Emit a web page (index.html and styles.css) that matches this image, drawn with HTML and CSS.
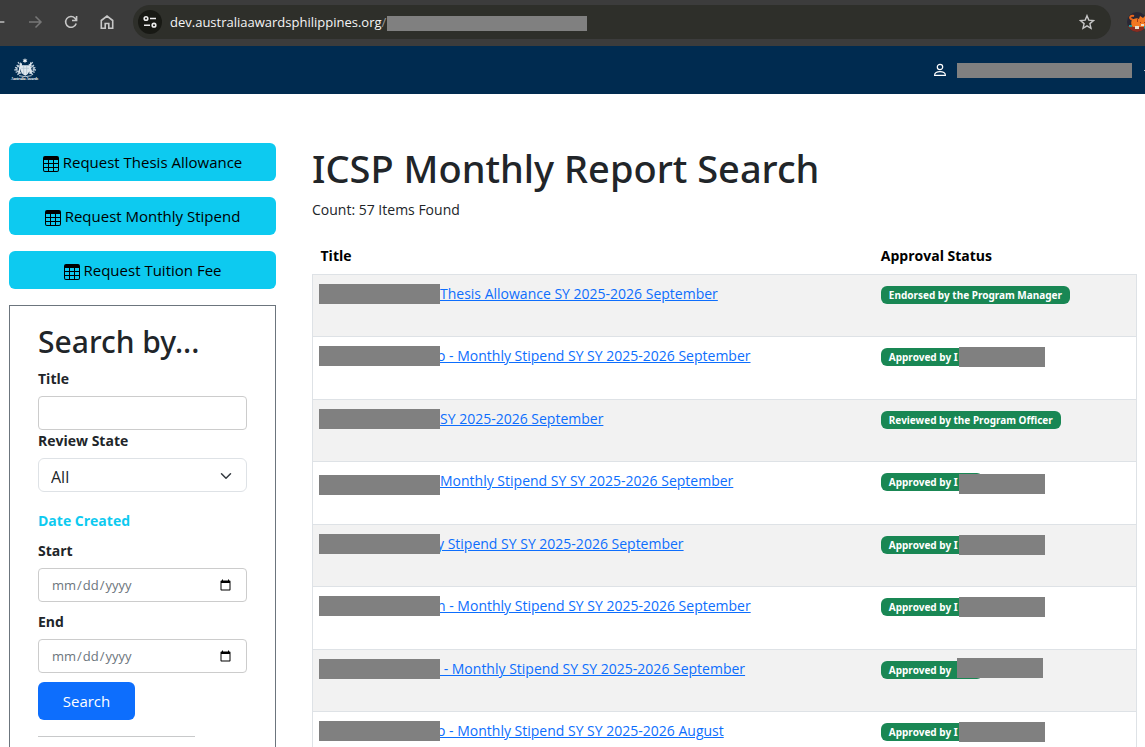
FILE: index.html
```html
<!DOCTYPE html>
<html lang="en">
<head>
<meta charset="utf-8">
<title>ICSP Monthly Report Search</title>
<link rel="stylesheet" href="styles.css">
</head>
<body>
<svg class="sprite" aria-hidden="true">
  <symbol id="table-icon" viewBox="0 0 16 16"><path d="M0 2a2 2 0 0 1 2-2h12a2 2 0 0 1 2 2v12a2 2 0 0 1-2 2H2a2 2 0 0 1-2-2zm15 2h-4v3h4zm0 4h-4v3h4zm0 4h-4v3h3a1 1 0 0 0 1-1zm-5 3v-3H6v3zm-5 0v-3H1v2a1 1 0 0 0 1 1zm-4-4h4V8H1zm0-4h4V4H1zm5-3v3h4V4zm4 4H6v3h4z"/></symbol>
</svg>
<div class="page">
  <header class="browser">
    <button class="tool back" aria-label="Back"><svg width="8" height="16" viewBox="0 0 8 16"><path d="M0 8h5" stroke="#c7c7c7" stroke-width="1.6"/></svg></button>
    <button class="tool" aria-label="Forward"><svg width="16" height="16" viewBox="0 0 16 16" fill="none" stroke="#777" stroke-width="1.5"><path d="M2 8h12M8.500 2.500 14 8l-5.500 5.500"/></svg></button>
    <button class="tool" aria-label="Reload"><svg width="16" height="16" viewBox="0 0 16 16" fill="none" stroke="#c7c7c7" stroke-width="1.600"><path d="M13.200 9.500A5.400 5.400 0 1 1 12 4.200L13.400 6M13.600 2v4.500H9"/></svg></button>
    <button class="tool" aria-label="Home"><svg width="16" height="16" viewBox="0 0 16 16" fill="none" stroke="#c7c7c7" stroke-width="1.600"><path d="M2.300 6.500 8 2l5.700 4.500v7.700H9.800V9.500H6.200v4.700H2.300z"/></svg></button>
    <div class="address">
      <button class="site" aria-label="Site information"><svg width="16" height="16" viewBox="0 0 16 16" fill="none" stroke="#eee" stroke-width="1.600"><circle cx="4" cy="4.500" r="1.800"/><path d="M8 4.500h6M2 11.200h6"/><circle cx="12" cy="11.200" r="1.800"/></svg></button>
      <span class="url">dev.australiaawardsphilippines.org<span class="slash">/</span></span><span class="mask url-mask"></span>
      <button class="star" aria-label="Bookmark"><svg width="16" height="16" viewBox="0 0 16 16" fill="none" stroke="#c7c7c7" stroke-width="1.400"><path d="m8 1.700 1.800 4.400 4.700.4-3.600 3.100 1.100 4.700L8 11.800l-4 2.500 1.100-4.700-3.600-3.100 4.700-.4z"/></svg></button>
    </div>
    <svg class="avatar" width="20" height="20" viewBox="0 0 20 20"><defs><clipPath id="av"><circle cx="10" cy="10" r="10"/></clipPath></defs><g clip-path="url(#av)"><path fill="#292735" d="M0 0h20v20H0z"/><path fill="#8a2d20" d="M0 14h20v6H0z"/><path d="M5 14C9 9 7 8 4 7 2 5 4 3 7 4" fill="none" stroke="#e8651d" stroke-width="2"/><path fill="#f27822" d="M5 8q4-3 7-1l1-3 3 2 2-2 2 3v6l-2 2H6q-3-3-1-7"/><path fill="#a33a18" d="M10 7h1v3h-1zM13 10h1v1h-1zM17 10h1v1h-1z"/><path fill="#e8dfd0" d="M8 14h4v3H8zM14 12h3v2h-3z"/><path fill="#279b9c" d="M2 13h3v2H2zM17 14h3v3h-3z"/></g></svg>
  </header>

  <nav class="navbar">
    <a class="brand" href="#" aria-label="Australia Awards">
      <svg width="30" height="26" viewBox="0 0 90 78">
        <g fill="none" stroke="#b9c9d6" stroke-width="3">
          <path d="M36 22c-9 1-17 8-18 15 6 5 7 10 16 12M56 22c9 0 15 7 17 14-5 7-7 11-16 13"/>
          <path d="M15 31l8 3M13 39l10-1M17 46l10-4M22 53l10-7M76 31l-8 3M78 39l-10-1M74 46l-10-4M69 53l-10-7M28 21l-4-6M64 21l4-6M20 24l12 10M72 24l-12 10" stroke-width="4"/>
          <path d="M27 56q18 6 38 0"/>
        </g>
        <path fill="#f4f7f9" d="m45 3 2 5 5-1-3 4 3 4-5-1-2 5-2-5-5 1 3-4-3-4 5 1z"/>
        <path fill="#dfe8ef" d="M33 25h25v18q-2 9-12 13-11-4-13-13zM31 16l5 4-2 11-4 15-6 4 3-14zM62 14l3 4-3 11 4 13-2 10-6-7-1-18z"/>
        <path stroke="#a9bccb" stroke-width="2" d="M34 34h23M41 25v26M50 25v26"/>
        <text x="3" y="70" class="brand-name">Australia Awards</text>
      </svg>
    </a>
    <a class="account" href="#" aria-label="Account">
      <svg width="14" height="14" viewBox="0 0 14 14" fill="none" stroke="#fff" stroke-width="1.200"><circle cx="7" cy="4" r="2.700"/><path d="M1.600 12.400h10.800c.2-2.500-2.400-3.700-5.400-3.700s-5.600 1.200-5.400 3.700z"/></svg>
      <span class="mask account-mask"></span>
    </a>
    <span class="caret"></span>
  </nav>

  <div class="content">
    <aside class="sidebar">
      <button class="request"><svg width="16" height="16"><use href="#table-icon"/></svg>Request Thesis Allowance</button>
      <button class="request"><svg width="16" height="16"><use href="#table-icon"/></svg>Request Monthly Stipend</button>
      <button class="request"><svg width="16" height="16"><use href="#table-icon"/></svg>Request Tuition Fee</button>
      <form class="panel">
        <h2>Search by...</h2>
        <label for="title">Title</label>
        <input class="control" id="title" type="text">
        <label for="state">Review State</label>
        <div class="select-wrap">
          <select class="control" id="state"><option>All</option></select>
          <svg class="chevron" width="12" height="12" viewBox="0 0 16 16" fill="none" stroke="#343a40" stroke-width="2" stroke-linecap="round" stroke-linejoin="round"><path d="m2 5 6 6 6-6"/></svg>
        </div>
        <p class="group">Date Created</p>
        <label for="start">Start</label>
        <input class="control date" id="start" type="date">
        <label class="spaced" for="end">End</label>
        <input class="control date" id="end" type="date">
        <button class="search" type="button">Search</button>
        <hr>
      </form>
    </aside>

    <main>
      <h1>ICSP Monthly Report Search</h1>
      <p class="count">Count: 57 Items Found</p>
      <table>
        <thead><tr><th>Title</th><th>Approval Status</th></tr></thead>
        <tbody>
          <tr><td><a href="#"><span class="mask name"></span>Thesis Allowance SY 2025-2026 September</a></td><td><span class="badge">Endorsed by the Program Manager</span></td></tr>
          <tr><td><a href="#"><span class="mask name over"></span>o - Monthly Stipend SY SY 2025-2026 September</a></td><td><span class="badge hidden-name">Approved by I<span class="mask"></span></span></td></tr>
          <tr><td><a href="#"><span class="mask name"></span>SY 2025-2026 September</a></td><td><span class="badge">Reviewed by the Program Officer</span></td></tr>
          <tr><td><a class="low" href="#"><span class="mask name"></span>Monthly Stipend SY SY 2025-2026 September</a></td><td><span class="badge hidden-name low">Approved by I<span class="mask"></span></span></td></tr>
          <tr><td><a href="#"><span class="mask name over"></span>y Stipend SY SY 2025-2026 September</a></td><td><span class="badge hidden-name">Approved by I<span class="mask"></span></span></td></tr>
          <tr><td><a href="#"><span class="mask name over"></span>n - Monthly Stipend SY SY 2025-2026 September</a></td><td><span class="badge hidden-name">Approved by I<span class="mask"></span></span></td></tr>
          <tr><td><a href="#"><span class="mask name"></span>&nbsp;- Monthly Stipend SY SY 2025-2026 September</a></td><td><span class="badge hidden-name high">Approved by<span class="mask"></span></span></td></tr>
          <tr><td><a href="#"><span class="mask name over"></span>o - Monthly Stipend SY SY 2025-2026 August</a></td><td><span class="badge hidden-name">Approved by I<span class="mask"></span></span></td></tr>
        </tbody>
      </table>
    </main>
  </div>
</div>
</body>
</html>
```
FILE: styles.css
```css
* { box-sizing: border-box; }

body {
  margin: 0;
  background: #fff;
  color: #212529;
  font: 14px/21px "Open Sans", "Noto Sans", sans-serif;
}

button, input, select { font: inherit; color: inherit; }
button { border: 0; padding: 0; background: none; }
h1, h2, p { margin: 0; }
.sprite { display: none; }
.page { height: 100vh; overflow: hidden; }
.mask { background: #808080; }

.browser {
  display: flex;
  align-items: center;
  height: 46px;
  padding-bottom: 2px;
  background: #3c3c3c;
  overflow: hidden;
}
.tool { display: flex; flex: none; width: 16px; margin-right: 20px; }
.tool.back { width: 7px; }
.address {
  display: flex;
  align-items: center;
  flex: 1;
  height: 34px;
  margin: 0 16px 0 -2px;
  padding: 0 16px 0 5px;
  border-radius: 17px;
  background: #2e2f2a;
  color: #f5f5f5;
  font-size: 13px;
}
.site {
  display: flex;
  align-items: center;
  justify-content: center;
  width: 24px;
  height: 24px;
  margin-right: 8px;
  border-radius: 50%;
  background: #181914;
}
.slash { color: #999; }
.url-mask { width: 200px; height: 15px; margin: 2px 0 0 1px; }
.star { display: flex; margin-left: auto; }
.avatar { flex: none; margin-right: -2px; }

.navbar {
  display: flex;
  align-items: center;
  height: 48px;
  padding-left: 10px;
  background: #002b50;
}
.brand { display: flex; }
.brand-name { font: bold 11px "Liberation Serif", serif; fill: #fff; }
.account { display: flex; align-items: center; gap: 10px; margin-left: auto; }
.account-mask { width: 175px; height: 15px; }
.caret { width: 1px; height: 1px; margin-left: 12px; background: #b6c4d0; }

.content {
  display: grid;
  grid-template-columns: 267px minmax(0, 1fr);
  gap: 36px;
  padding: 49px 8px 0 9px;
}

.request {
  display: flex;
  align-items: center;
  justify-content: center;
  gap: 4px;
  width: 100%;
  height: 38px;
  margin-bottom: 16px;
  border-radius: 6px;
  background: #0dcaf0;
  color: #000;
  font-size: 15px;
}
.request svg { margin-top: 4px; }

.panel {
  padding: 17px 28px 40px;
  border: 1px solid #6c757d;
}
h1, h2 { font-family: "Noto Sans", sans-serif; font-weight: 500; }
h2 { margin-bottom: 7px; font-size: 30px; line-height: 38px; }
label, .group { display: block; font-weight: 700; }
label { margin-bottom: 7px; }
.spaced { margin-top: 9px; }
.group { margin: 18px 0 9px; color: #0dcaf0; }
.control {
  display: block;
  width: 100%;
  height: 34px;
  padding: 0 12px;
  border: 1px solid #ccc;
  border-radius: 4px;
  background: #fff;
}
.select-wrap { position: relative; }
select.control {
  appearance: none;
  border-color: #dee2e6;
  border-radius: 6px;
  padding-top: 5px;
  font-size: 16px;
}
.chevron { position: absolute; right: 15px; top: 12px; pointer-events: none; }
.date { color: #6c757d; font-size: 13px; }
.search {
  width: 97px;
  height: 38px;
  margin-top: 9px;
  border-radius: 6px;
  background: #0d6efd;
  color: #fff;
  font-size: 15px;
}
hr { width: 75%; margin: 16px 0 0; border: 0; border-top: 1px solid #c8c9ca; }

h1 { margin-bottom: 7px; padding-top: 1px; font-size: 38px; line-height: 48px; }
.count { margin-bottom: 17px; }
table { width: 100%; border-collapse: collapse; table-layout: fixed; }
th { width: 32%; height: 37px; padding: 8px; text-align: left; color: #000; }
th:first-child { width: 68%; }
tbody { border: 1px solid #dee2e6; }
td { height: 63px; padding: 8px; vertical-align: top; border-top: 1px solid #dee2e6; }
tbody tr:nth-child(odd) td { height: 62px; background: #f2f2f2; }
td a { display: flex; align-items: center; height: 21px; color: #0d6efd; }
.name { position: relative; flex: none; width: 121px; height: 20px; margin-left: -2px; }
.name.over { margin-right: -3px; }
a.low .name { margin-top: 8px; }
.badge {
  display: inline-block;
  padding: 0 8px;
  border-radius: 6px;
  background: #198754;
  color: #fff;
  font: bold 10px/18px "Noto Sans", sans-serif;
}
.hidden-name { position: relative; width: 102px; white-space: nowrap; }
.hidden-name .mask { position: absolute; left: 78px; top: -1px; width: 86px; height: 20px; }
.hidden-name.low .mask { top: 1px; }
.hidden-name.high .mask { left: 76px; top: -3px; }
```
